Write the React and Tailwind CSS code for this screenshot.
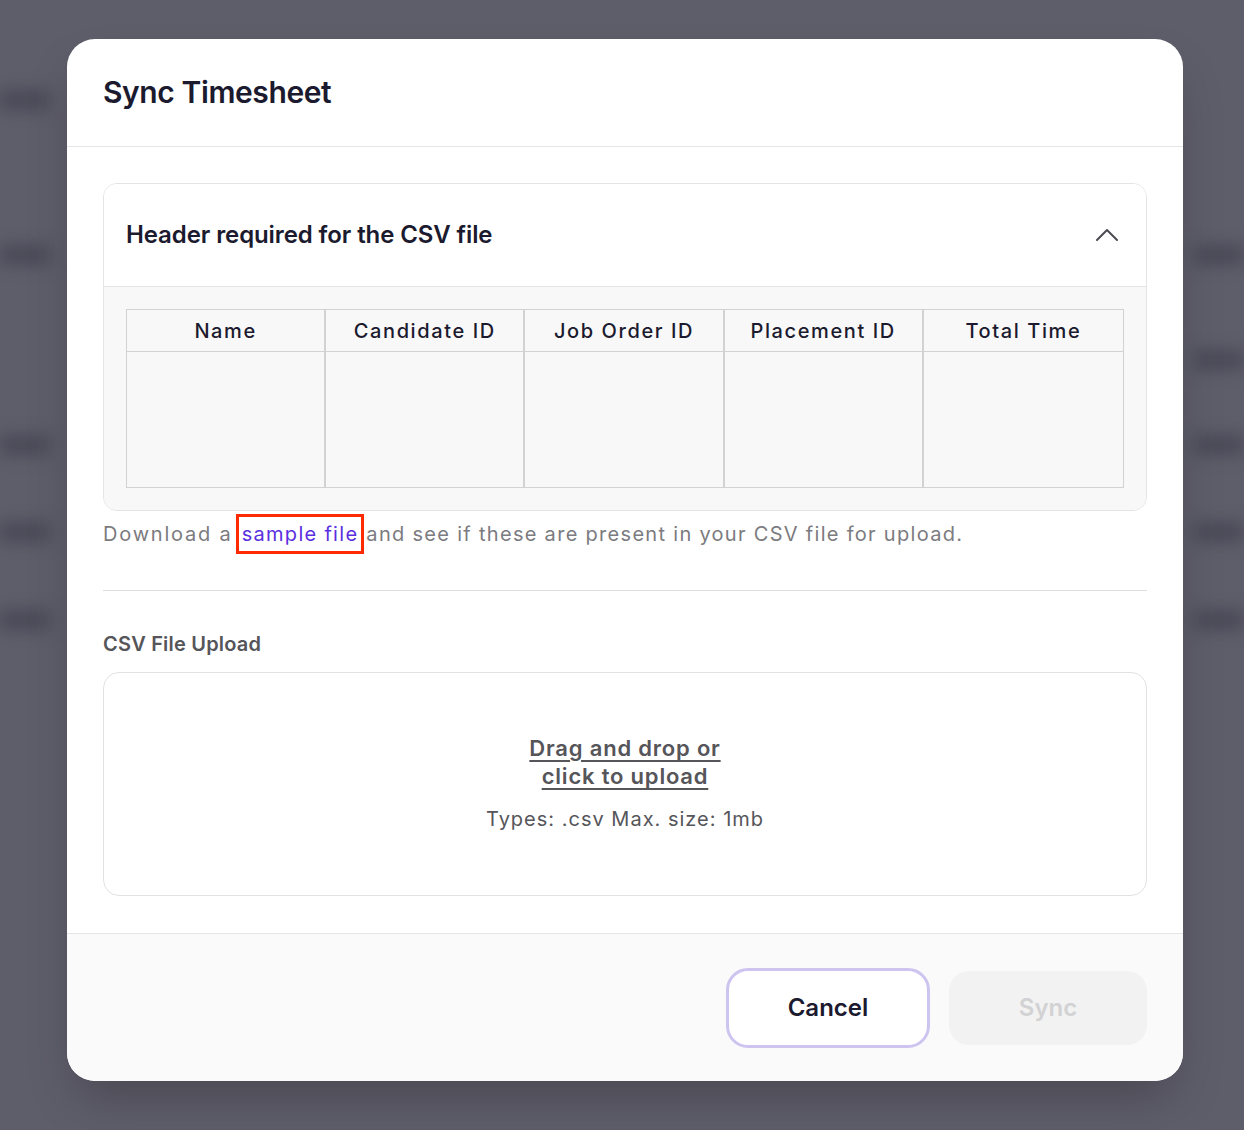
import React from 'react';

const font = { fontFamily: 'Inter, "Noto Sans", sans-serif' };

const columns = ['Name', 'Candidate ID', 'Job Order ID', 'Placement ID', 'Total Time'];

function ChevronUp() {
  return (
    <svg width="26" height="24" viewBox="0 0 26 24" fill="none" stroke="#4b4b52" strokeWidth="2" strokeLinecap="round" strokeLinejoin="round">
      <path d="M3 17l10-10 10 10" />
    </svg>
  );
}

// Page behind the dialog, dimmed and blurred
function Backdrop() {
  const left = [100, 255, 445, 532, 620];
  const right = [255, 360, 445, 532, 620];
  return (
    <div className="absolute inset-0 bg-[#5e5d6a] overflow-hidden">
      <div className="absolute inset-0 blur-[8px]">
        {left.map((y) => (
          <div key={'l' + y} className="absolute left-0 h-5 w-[50px] rounded bg-[#4a4957]" style={{ top: y - 10 }} />
        ))}
        {right.map((y) => (
          <div key={'r' + y} className="absolute right-0 h-5 w-[50px] rounded bg-[#4a4957]" style={{ top: y - 10 }} />
        ))}
      </div>
    </div>
  );
}

export default function App() {
  return (
    <div className="relative w-[1244px] h-[1130px] overflow-hidden" style={font}>
      <Backdrop />
      <div className="relative pt-[39px] pl-[67px]">
        <div className="w-[1116px] h-[1042px] bg-white rounded-[28px] overflow-hidden flex flex-col shadow-2xl">
          {/* Header */}
          <div className="h-[108px] border-b border-[#e6e6e8] px-[36px] flex items-center">
            <h1 className="text-[30px] font-semibold text-[#1b1a2e] tracking-[-0.4px] -mt-[1px]">Sync Timesheet</h1>
          </div>

          {/* Body */}
          <div className="flex-1 px-[36px] pt-[36px]">
            <div className="border border-[#e4e4e6] rounded-[14px] overflow-hidden">
              <div className="h-[103px] pl-[22px] pr-[26px] flex items-center justify-between bg-white border-b border-[#e4e4e6]">
                <span className="text-[24px] font-semibold text-[#1b1a2e] tracking-[-0.1px]">Header required for the CSV file</span>
                <ChevronUp />
              </div>
              <div className="bg-[#f8f8f8] px-[22px] pt-[22px] pb-[22px]">
                <div className="grid grid-cols-5 border border-[#d2d2d2]">
                  {columns.map((c, i) => (
                    <div key={c} className={`flex flex-col ${i < 4 ? 'border-r-2 border-[#d2d2d2]' : ''}`}>
                      <div className="h-[42px] border-b border-[#d2d2d2] flex items-center justify-center text-[20px] font-medium text-[#1b1a2e] tracking-[1.6px]">
                        {c}
                      </div>
                      <div className="h-[135px]" />
                    </div>
                  ))}
                </div>
              </div>
            </div>

            <p className="mt-[3px] text-[20px] text-[#7b7b80] tracking-[1.3px] flex items-center">
              <span className="tracking-[1.8px]">Download a</span>
              <span className="ml-[3px] mr-[2px] border-[3px] border-[#ff2a00] px-[3px] py-[4px] text-[#5a2fe0] leading-[26px]">sample file</span>
              <span>and see if these are present in your CSV file for upload.</span>
            </p>

            <div className="mt-[36px] border-t border-[#dedee0]" />

            <div className="mt-[38px] text-[20px] font-semibold text-[#55555a] tracking-[0.2px]">CSV File Upload</div>

            <div className="mt-[13px] h-[224px] border border-[#e2e2e4] rounded-[16px] flex flex-col items-center justify-center">
              <div className="text-[22px] font-semibold text-[#55555a] tracking-[0.8px] underline underline-offset-[4px] text-center leading-[28px]">
                Drag and drop or
                <br />
                click to upload
              </div>
              <div className="mt-[14px] text-[20px] text-[#55555a] tracking-[1px]">Types: .csv Max. size: 1mb</div>
            </div>
          </div>

          {/* Footer */}
          <div className="h-[148px] border-t border-[#e6e6e8] bg-[#fafafa] px-[36px] flex items-center justify-end gap-[19px]">
            <button className="w-[204px] h-[80px] rounded-[22px] border-[3px] border-[#cec4f0] bg-white text-[24px] font-semibold text-[#1b1a2e]">
              Cancel
            </button>
            <button className="w-[198px] h-[74px] rounded-[20px] bg-[#f2f2f2] text-[24px] font-semibold text-[#d2d2d4]">
              Sync
            </button>
          </div>
        </div>
      </div>
    </div>
  );
}
